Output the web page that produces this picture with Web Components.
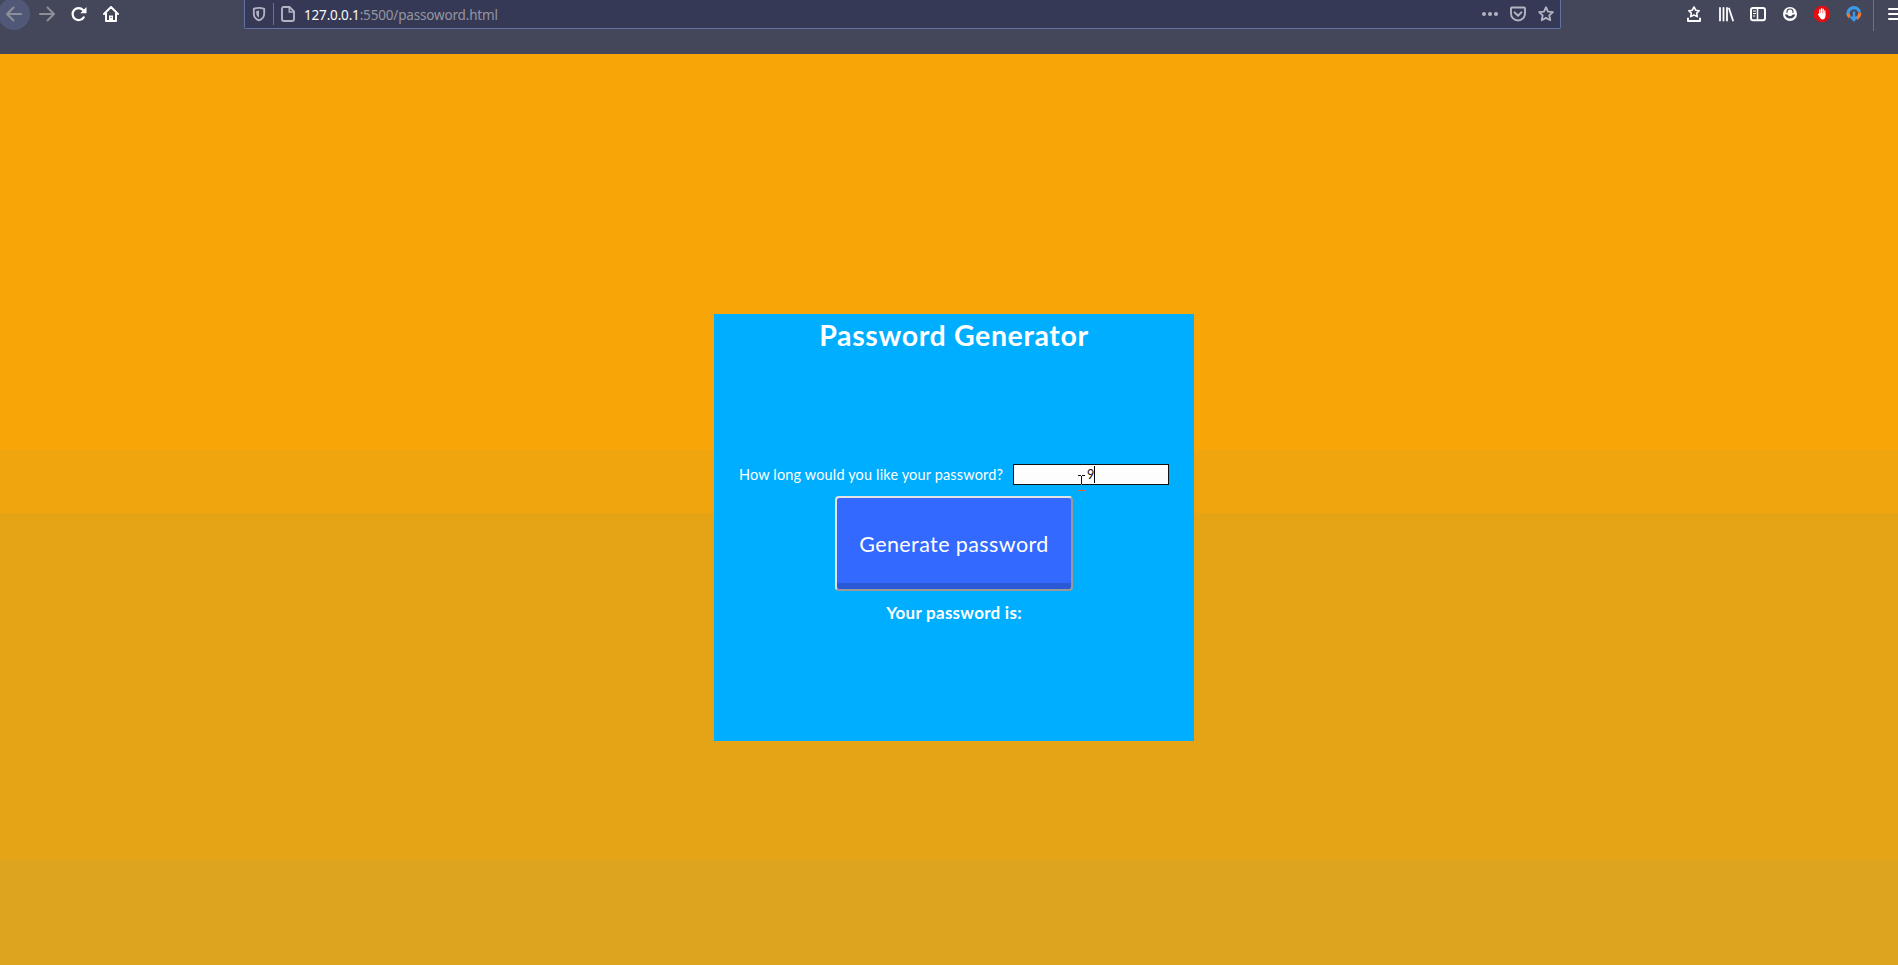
<!DOCTYPE html>
<html lang="en">
<head>
<meta charset="utf-8">
<title>Password Generator</title>
<style>
html,body{margin:0;height:100%;overflow:hidden}
body{display:flex;flex-direction:column;font-family:Lato,Carlito,sans-serif}
</style>
</head>
<body>
<browser-bar></browser-bar>
<page-view><password-card></password-card></page-view>
<script>
const define=(name,html)=>customElements.define(name,class extends HTMLElement{
  constructor(){super();this.attachShadow({mode:'open'}).innerHTML=html}
});

const shapes={
back:'<g fill="none" stroke="#8d8e97" stroke-width="2" stroke-linecap="round" stroke-linejoin="round"><path d="M15 8H1.5M7.5 1.5L1 8l6.5 6.500"/></g>',
forward:'<g fill="none" stroke="#8d8e97" stroke-width="2" stroke-linecap="round" stroke-linejoin="round"><path d="M1 8h13.500M8.500 1.500L15 8l-6.500 6.500"/></g>',
reload:'<path d="M12.700 11.300A6 6 0 1 1 12 4" fill="none" stroke="#fff" stroke-width="2.200" stroke-linecap="round"/><path d="M15.500 1v6.200H9.300z" fill="#fff"/>',
home:'<g fill="none" stroke="#fff" stroke-width="2" stroke-linejoin="round" stroke-linecap="round"><path d="M1 8l7-7 7 7M3 7v8h10V7"/></g><path d="M6 15V9.500h4V15z" fill="#fff"/><path d="M7.500 11h1v1h-1z" fill="#44475a"/>',
shield:'<path d="M8 1.900c2 0 3.600.4 5.200 1v4.600c0 3.500-2.200 5.800-5.200 6.900-3-1.100-5.200-3.400-5.200-6.900V2.900c1.600-.6 3.200-1 5.200-1z" fill="none" stroke="#b3b4c2" stroke-width="1.800"/><path d="M8 4.600v6.800c-1.700-1-2.700-2.200-2.700-4.200V5.100C6.200 4.800 7 4.600 8 4.600z" fill="#b3b4c2"/>',
page:'<path d="M3.500 1h6L14 5.500V13q0 2-2 2H4q-2 0-2-2V3q0-2 1.500-2z" fill="none" stroke="#b3b4c2" stroke-width="1.900"/><path d="M9.300 1.500V6H14" fill="none" stroke="#b3b4c2" stroke-width="1.500"/>',
dots:'<g fill="#b3b4c2"><circle cx="2" cy="8" r="2"/><circle cx="8" cy="8" r="2"/><circle cx="14" cy="8" r="2"/></g>',
pocket:'<path d="M1 2.500q0-1 1-1h12q1 0 1 1V7.500a7 7 0 0 1-14 0z" fill="none" stroke="#b3b4c2" stroke-width="1.900"/><path d="M4.600 6.400L8 9.700l3.400-3.300" fill="none" stroke="#b3b4c2" stroke-width="2" stroke-linecap="round" stroke-linejoin="round"/>',
star:'<path d="M8 1.200l2 4.400 4.900.5-3.600 3.300 1 4.800L8 11.900l-4.300 2.300 1-4.800L1.100 6.100 6 5.600z" fill="none" stroke="#b3b4c2" stroke-width="1.800" stroke-linejoin="round"/>',
bookmarks:'<path d="M8 1l1.700 3.200 3.500.5-2.500 2.400.6 3.500L8 9l-3.300 1.600.6-3.500-2.500-2.400 3.500-.5z" fill="none" stroke="#fff" stroke-width="1.600" stroke-linejoin="round"/><path d="M2 12.500V15h12v-2.500" fill="none" stroke="#fff" stroke-width="2" stroke-linecap="round" stroke-linejoin="round"/>',
library:'<path d="M2 2v12.500M5.500 2v12.500M9 2v12.500M11 2.500l4 12" stroke="#fff" stroke-width="1.800" stroke-linecap="round"/>',
sidebar:'<rect x="1" y="2" width="14" height="12.200" rx="2" fill="none" stroke="#fff" stroke-width="2"/><path d="M7.500 2v12" stroke="#fff" stroke-width="1.500"/><path d="M3 5h3M3 7.500h3M3 10h2" stroke="#fff"/>',
account:'<circle cx="8" cy="8" r="7" fill="#fff"/><path d="M5 7V5.800a3 2.800 0 0 1 6 0V7" fill="none" stroke="#44475a" stroke-width="1.100"/><path d="M2.800 8.500h2.500Q6.300 10.300 8 10.300t2.700-1.800h2.500Q12 12.600 8 12.600T2.800 8.500z" fill="#44475a"/>',
block:'<path d="M4.700 0h6.600L16 4.700v6.600L11.300 16H4.700L0 11.300V4.700z" fill="#e30d12"/><path d="M5.800 8.500V4M7.500 8V2.700M9.200 8V3.200M10.800 9V4.800M4.500 8.300l2 2.500" stroke="#fff" stroke-width="1.300" stroke-linecap="round"/><path d="M5.200 7.300h6.200v3.200q-.5 3-3 3-1.600 0-3.200-3z" fill="#fff"/>',
down:'<g fill="none" stroke-width="3.200"><path d="M2.200 9A5.800 5.800 0 0 1 13.500 6" stroke="#3c9be8"/><path d="M13.600 6.500a6 6 0 0 1-3.300 6M2.200 7.500a6 6 0 0 0 1.500 3.800" stroke="#e87a3c"/></g><path d="M8 5.500V12" stroke="#3c9be8" stroke-width="2.400"/><path d="M3 10.500h9L8 16z" fill="#3c9be8"/>',
menu:'<path d="M1 3h15M1 8h15M1 13h15" stroke="#fff" stroke-width="2" stroke-linecap="round"/>'
};
customElements.define('ui-icon',class extends HTMLElement{
  connectedCallback(){
    if(this.shadowRoot)return;
    this.attachShadow({mode:'open'}).innerHTML=`<style>:host{display:block;width:16px;height:16px;flex:none}svg{display:block}</style><svg width="16" height="16" viewBox="0 0 16 16">${shapes[this.getAttribute('name')]}</svg>`;
  }
});

define('address-bar',`<style>
:host{display:flex;flex:none;align-items:center;box-sizing:border-box;width:1317px;height:29px;padding:0 6px 0 6px;background:#363955;border:1px solid #6272a4;border-top:0;border-radius:0 0 2px 2px;font:13.500px/20px "Noto Sans","Open Sans",sans-serif;color:#9495a0}
i{width:1px;height:22px;background:#6272a4;margin:0 6px 0 6px}
.url{flex:1;margin-left:8px;padding-top:2px;white-space:nowrap;letter-spacing:-.17px}
b{font-weight:400;color:#fafafa}
.actions{display:flex;gap:12px}
</style><ui-icon name="shield"></ui-icon><i></i><ui-icon name="page"></ui-icon><span class="url"><b>127.0.0.1</b>:5500/passoword.html</span><div class="actions"><ui-icon name="dots"></ui-icon><ui-icon name="pocket"></ui-icon><ui-icon name="star"></ui-icon></div>`);

define('browser-bar',`<style>
:host{display:flex;flex:none;height:54px;background:#44475a;overflow:hidden;align-items:flex-start}
.nav{display:flex;flex:none;width:244px;height:28px;align-items:center;gap:16px}
.back{display:grid;place-items:center;width:32px;height:32px;margin:0 -7px 0 -2px;border-radius:50%;background:#515877;flex:none}
.tools{display:flex;flex:none;gap:16px;align-items:center;height:28px;margin-left:125px}
i{width:1px;height:31px;background:#6272a4;margin:0 -2px 0 -5px;align-self:flex-start}
</style><div class="nav"><span class="back"><ui-icon name="back"></ui-icon></span><ui-icon name="forward"></ui-icon><ui-icon name="reload"></ui-icon><ui-icon name="home"></ui-icon></div><address-bar></address-bar>
<div class="tools"><ui-icon name="bookmarks"></ui-icon><ui-icon name="library"></ui-icon><ui-icon name="sidebar"></ui-icon><ui-icon name="account"></ui-icon><ui-icon name="block"></ui-icon><ui-icon name="down"></ui-icon><i></i><ui-icon name="menu"></ui-icon></div>`);

define('page-view',`<style>
:host{display:flex;flex:1;align-items:flex-start;justify-content:center;box-sizing:border-box;padding:260px 0 0 10px;background:linear-gradient(#f8a507 396px,#f0a50f 396px 459px,#e5a416 459px 806px,#dca41f 806px)}
</style><slot></slot>`);

define('length-field',`<style>
:host{display:flex;align-items:center;justify-content:center;position:relative;box-sizing:border-box;width:156px;height:21px;background:#fdfdfd;border:1px solid #111;color:#111;font-size:12.500px;line-height:17px}
span:first-child{padding-top:3px}
.caret{width:1px;height:17px;background:#000}
svg{position:absolute;left:64px;top:9px}
</style><span>9</span><span class="caret"></span><svg width="8" height="18" viewBox="0 0 8 18"><path d="M0 1.500H3M4 1.500h3M3.500 2v8" stroke="#111" fill="none"/><path d="M3.500 10v6M0 16.500h7" stroke="#e5602b" fill="none"/></svg>`);

define('generate-button',`<style>
:host{display:block}
button{display:block;box-sizing:border-box;width:238px;height:95px;padding:1px 0 0;border:2px solid;border-color:#e3e3e3 #999 #999 #e3e3e3;border-radius:4px;background:#3369ff;box-shadow:inset 0 -6px #2a59d6;color:#fff;font:21.500px/30px Lato,sans-serif;letter-spacing:.4px;white-space:nowrap}
</style><button><slot></slot></button>`);

define('password-card',`<style>
:host{display:flex;flex-direction:column;align-items:center;width:480px;height:427px;background:#00aeff;color:#fff;white-space:nowrap}
h1{margin:1px 0 0;font-size:28.500px;line-height:40px;height:149px;font-weight:700;letter-spacing:.62px}
.row{display:flex;align-items:center;height:21px;width:430px;justify-content:space-between}
label{font-size:14.500px;line-height:20px;letter-spacing:.15px}
generate-button{margin-top:11px}
h3{margin:11px 0 0;font-size:17px;line-height:22px;letter-spacing:.27px}
</style><h1>Password Generator</h1><div class="row"><label>How long would you like your password?</label><length-field></length-field></div><generate-button>Generate password</generate-button><h3>Your password is:</h3>`);
</script>
</body>
</html>
